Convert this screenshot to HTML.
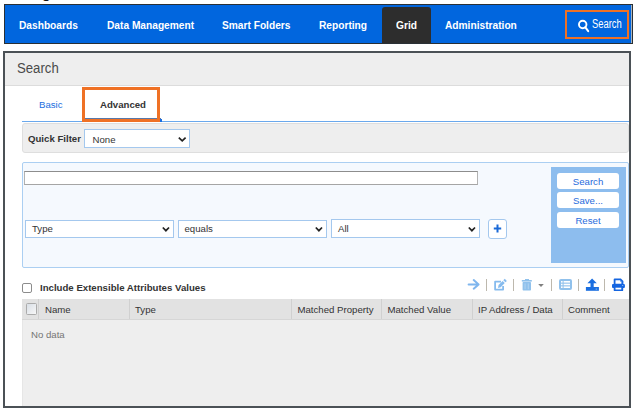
<!DOCTYPE html>
<html><head><meta charset="utf-8">
<style>
html,body{margin:0;padding:0;width:634px;height:411px;overflow:hidden;background:#fff;font-family:"Liberation Sans",sans-serif;}
.a{position:absolute;box-sizing:border-box;}
.t{position:absolute;white-space:nowrap;line-height:1;transform-origin:0 0;}
.nav{left:4px;top:4px;width:629px;height:40px;background:#0166de;border:1px solid #2a3035;}
.navt{color:#fff;font-weight:bold;font-size:11.5px;transform:scaleX(0.885);}
.sm{font-size:9.65px;color:#333;}
.b{font-weight:bold;}
.sm.b{font-size:9.9px;transform:scaleX(0.975);}
.sel{background:#fff;border:1px solid #a4c8ee;}
.chev{position:absolute;}
.sep{position:absolute;top:279px;width:1px;height:12px;background:#bdb8ad;}
.hd{position:absolute;top:299px;height:20px;width:1px;background:#d0d0d0;}
</style></head><body>
<!-- top cut-off title descender -->
<div class="t b" style="left:42px;top:-14px;font-size:14px;color:#111;">g</div>

<!-- NAV -->
<div class="a nav"></div>
<div class="a" style="left:631px;top:5px;width:1px;height:38px;background:#a9b3bc;"></div>
<div class="a" style="left:382px;top:7px;width:49px;height:36px;background:#2d2d2d;border-radius:3px 3px 0 0;"></div>
<div class="t navt" style="left:19px;top:20.2px;">Dashboards</div>
<div class="t navt" style="left:106.5px;top:20.2px;">Data Management</div>
<div class="t navt" style="left:222px;top:20.2px;">Smart Folders</div>
<div class="t navt" style="left:319px;top:20.2px;">Reporting</div>
<div class="t navt" style="left:396px;top:20.2px;">Grid</div>
<div class="t navt" style="left:445px;top:20.2px;">Administration</div>
<!-- search box -->
<div class="a" style="left:565px;top:9.5px;width:64px;height:29.5px;border:2px solid #ef7125;"></div>
<svg class="a" style="left:577px;top:18px" width="14" height="16" viewBox="0 0 14 16">
  <circle cx="5.7" cy="6.5" r="3.75" fill="none" stroke="#fff" stroke-width="1.9"/>
  <line x1="8.2" y1="9.2" x2="11.2" y2="13.2" stroke="#fff" stroke-width="2" stroke-linecap="round"/>
</svg>
<div class="t" style="left:591.8px;top:17.7px;color:#fff;font-size:12.5px;transform:scaleX(0.75);">Search</div>

<!-- MAIN PANEL -->
<div class="a" style="left:3px;top:51px;width:628px;height:357px;border:2px solid #4b5156;background:#fff;"></div>
<div class="a" style="left:5px;top:53px;width:624px;height:33px;background:#eee;border-bottom:1px solid #dcdcdc;"></div>
<div class="t" style="left:16.8px;top:61.2px;font-size:14px;color:#4a4a4a;transform:scaleX(0.94);">Search</div>

<!-- tabs -->
<div class="t sm" style="left:39px;top:99.5px;color:#1a6ee0;">Basic</div>
<div class="a" style="left:22px;top:121px;width:607px;height:1px;background:#6aa8ec;"></div>
<div class="a" style="left:85px;top:118px;width:76px;height:3px;background:#5a78a8;"></div><div class="a" style="left:160px;top:119px;width:1.5px;height:2.5px;background:#1a6ee0;"></div>
<div class="a" style="left:82px;top:87px;width:78px;height:35px;border:3px solid #ef7125;"></div>
<div class="t sm" style="left:100px;top:99.5px;color:#333;font-weight:bold;">Advanced</div>

<!-- quick filter -->
<div class="a" style="left:22px;top:123px;width:607px;height:30px;background:#eee;border:1px solid #dedede;border-radius:3px;"></div>
<div class="t sm b" style="left:28px;top:134.2px;color:#333;">Quick Filter</div>
<div class="a sel" style="left:84px;top:129px;width:106px;height:19px;"></div>
<div class="t sm" style="left:92.5px;top:134.8px;">None</div>
<svg class="chev" style="left:176.5px;top:136px" width="10" height="7" viewBox="0 0 10 7"><polyline points="1.8,1.6 5.2,4.9 8.6,1.6" fill="none" stroke="#222" stroke-width="1.7"/></svg>

<!-- criteria -->
<div class="a" style="left:22px;top:162px;width:607px;height:106px;background:#f5f9fe;border:1px solid #abcff2;border-radius:2px;"></div>
<div class="a" style="left:24px;top:171px;width:454px;height:14px;background:#fff;border:1px solid #b2b2b2;border-top-color:#8d8d8d;border-bottom-color:#a5a5a5;"></div>
<div class="a sel" style="left:25px;top:220px;width:148.5px;height:18px;"></div>
<div class="t sm" style="left:32px;top:224px;">Type</div>
<svg class="chev" style="left:161px;top:226px" width="10" height="7" viewBox="0 0 10 7"><polyline points="1.8,1.5 4.9,4.7 8,1.5" fill="none" stroke="#222" stroke-width="1.7"/></svg>
<div class="a sel" style="left:178px;top:220px;width:148.5px;height:18px;"></div>
<div class="t sm" style="left:184.5px;top:224px;">equals</div>
<svg class="chev" style="left:314px;top:226px" width="10" height="7" viewBox="0 0 10 7"><polyline points="1.8,1.5 4.9,4.7 8,1.5" fill="none" stroke="#222" stroke-width="1.7"/></svg>
<div class="a sel" style="left:331px;top:219px;width:148.5px;height:19px;"></div>
<div class="t sm" style="left:338px;top:224px;">All</div>
<svg class="chev" style="left:467px;top:226px" width="10" height="7" viewBox="0 0 10 7"><polyline points="1.8,1.5 4.9,4.7 8,1.5" fill="none" stroke="#222" stroke-width="1.7"/></svg>
<div class="a" style="left:488px;top:219px;width:19px;height:20px;background:#fff;border:1px solid #a4c8ee;border-radius:3px;"></div>
<svg class="a" style="left:493px;top:224px" width="9" height="9" viewBox="0 0 9 9"><path d="M4.5 0.5V8.5M0.8 4.5H8.2" stroke="#1a6ad8" stroke-width="2"/></svg>

<div class="a" style="left:551px;top:167px;width:75px;height:96px;background:#8dbdee;"></div>
<div class="a" style="left:557px;top:173px;width:62px;height:16.3px;background:#fff;border-radius:3px;"></div>
<div class="a" style="left:557px;top:192.3px;width:62px;height:16.2px;background:#fff;border-radius:3px;"></div>
<div class="a" style="left:557px;top:212px;width:62px;height:16px;background:#fff;border-radius:3px;"></div>
<div class="t sm" style="left:557px;width:62px;text-align:center;top:176.8px;color:#1f6bdc;">Search</div>
<div class="t sm" style="left:557px;width:62px;text-align:center;top:196px;color:#1f6bdc;">Save...</div>
<div class="t sm" style="left:557px;width:62px;text-align:center;top:215.6px;color:#1f6bdc;">Reset</div>

<!-- include row -->
<div class="a" style="left:22px;top:282.7px;width:10px;height:10.2px;border:1px solid #8c8c8c;border-radius:2px;background:#fff;"></div>
<div class="t sm b" style="left:40px;top:282.7px;color:#333;">Include Extensible Attributes Values</div>

<!-- toolbar -->
<svg class="a" style="left:466px;top:278px" width="16" height="13" viewBox="0 0 16 13">
  <path d="M2.6 6.4H12.6M7.7 2.1L12.6 6.4L7.7 10.7" fill="none" stroke="#7fb6ee" stroke-width="2" stroke-linecap="round" stroke-linejoin="round"/>
</svg>
<div class="sep" style="left:486px;"></div>
<svg class="a" style="left:493px;top:278px" width="16" height="14" viewBox="0 0 16 14">
  <path d="M8 3.7H2.1V11.6H10.1V8" fill="none" stroke="#86bbee" stroke-width="1.8" stroke-linejoin="round"/>
  <path d="M5 9.9L5.54 7.04L9.64 2.94L11.76 5.06L7.66 9.16Z" fill="#86bbee"/>
  <path d="M10.34 2.24L11.74 0.84L13.86 2.96L12.46 4.36Z" fill="#86bbee"/>
</svg>
<div class="sep" style="left:513px;"></div>
<svg class="a" style="left:521px;top:279px" width="12" height="13" viewBox="0 0 12 13">
  <rect x="0.8" y="1" width="10" height="1.6" fill="#90c1ec"/>
  <rect x="4" y="0" width="4" height="1.4" fill="#90c1ec"/>
  <rect x="1.6" y="3" width="8.4" height="8.6" rx="0.8" fill="#90c1ec"/>
  <rect x="3.6" y="4.4" width="0.9" height="5.8" fill="#b4d5f2"/>
  <rect x="6.8" y="4.4" width="0.9" height="5.8" fill="#b4d5f2"/>
</svg>
<svg class="a" style="left:538px;top:284px" width="6" height="4" viewBox="0 0 6 4"><path d="M0.2 0H5.8L3 3Z" fill="#808080"/></svg>
<div class="sep" style="left:551px;"></div>
<svg class="a" style="left:559px;top:279px" width="13" height="11" viewBox="0 0 13 11">
  <rect x="0" y="0" width="13" height="11" rx="2" fill="#90c1ec"/>
  <rect x="2" y="2" width="1.6" height="1.6" fill="#fff"/><rect x="4.6" y="2" width="6.4" height="1.6" fill="#fff"/>
  <rect x="2" y="4.7" width="1.6" height="1.6" fill="#fff"/><rect x="4.6" y="4.7" width="6.4" height="1.6" fill="#fff"/>
  <rect x="2" y="7.4" width="1.6" height="1.6" fill="#fff"/><rect x="4.6" y="7.4" width="6.4" height="1.6" fill="#fff"/>
</svg>
<div class="sep" style="left:577.5px;width:1.4px;"></div>
<svg class="a" style="left:585px;top:278px" width="14" height="13" viewBox="0 0 14 13">
  <path d="M7.1 0.4L11.8 5.2H8.7V10H5.5V5.2H2.4Z" fill="#1a6ee0"/>
  <path d="M0.9 9H13.9V12.8H0.9Z" fill="#1a6ee0"/>
  <rect x="10.6" y="10.6" width="1.6" height="1" fill="#8fbff0"/>
</svg>
<div class="sep" style="left:604px;"></div>
<svg class="a" style="left:608px;top:276px" width="20" height="18" viewBox="0 0 20 18">
  <path d="M5.7 3.4Q5.7 2.4 6.7 2.4H12.9L15.4 4.9V8.5H5.7Z" fill="#1565e0"/>
  <path d="M7.5 4.2H12.1L13.4 5.5V7.7H7.5Z" fill="#fff"/>
  <path d="M12.1 4.2V5.5H13.4Z" fill="#1565e0"/>
  <rect x="4" y="7.9" width="12.9" height="4" rx="1" fill="#1565e0"/>
  <rect x="5.7" y="10.8" width="9.5" height="4.3" rx="0.9" fill="#1565e0"/>
  <rect x="7.5" y="11.7" width="5.8" height="1.8" fill="#fff"/>
  <rect x="14.1" y="9.1" width="1.1" height="0.9" fill="#9cc3f2"/>
</svg>

<!-- grid -->
<div class="a" style="left:22px;top:299px;width:607px;height:21px;background:#e2e2e2;border-bottom:1px solid #d6d6d6;"></div>
<div class="a" style="left:22px;top:320px;width:607px;height:86px;background:#eee;border-left:1px solid #e6e6e6;"></div>
<div class="a" style="left:26px;top:303px;width:11px;height:12px;border:1.3px solid #ababab;border-radius:1.5px;background:linear-gradient(135deg,#d9dfe6,#f7f7f7);"></div>
<div class="hd" style="left:38px;"></div>
<div class="hd" style="left:129px;"></div>
<div class="hd" style="left:291px;"></div>
<div class="hd" style="left:381px;"></div>
<div class="hd" style="left:472px;"></div>
<div class="hd" style="left:562px;"></div>
<div class="t sm" style="left:45px;top:304.9px;">Name</div>
<div class="t sm" style="left:135px;top:304.9px;">Type</div>
<div class="t sm" style="left:297.5px;top:304.9px;">Matched Property</div>
<div class="t sm" style="left:387.5px;top:304.9px;">Matched Value</div>
<div class="t sm" style="left:478px;top:304.9px;">IP Address / Data</div>
<div class="t sm" style="left:568px;top:304.9px;">Comment</div>
<div class="t sm" style="left:31px;top:330.4px;color:#747474;">No data</div>
</body></html>
